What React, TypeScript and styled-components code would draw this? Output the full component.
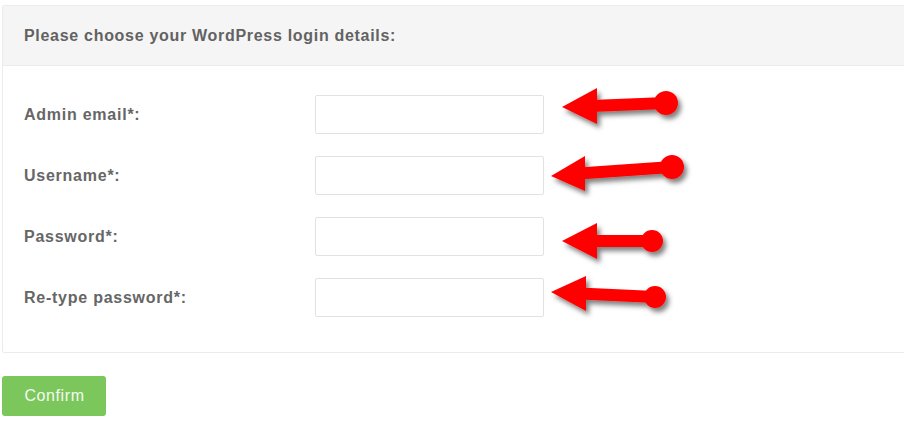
import styled, { createGlobalStyle } from "styled-components";

const GlobalStyle = createGlobalStyle`
  body {
    margin: 0;
    background: #ffffff;
    font-family: "Liberation Sans", Arial, sans-serif;
    overflow: hidden;
  }
`;

const Page = styled.div`
  position: relative;
  width: 904px;
  height: 422px;
  padding: 5px 0 0 2px;
  box-sizing: border-box;
  overflow: hidden;
`;

const Panel = styled.div`
  width: 940px;
  border: 1px solid #ececec;
  border-radius: 2px;
  background: #fff;
`;

const PanelHeader = styled.div`
  height: 59px;
  display: flex;
  align-items: center;
  padding-left: 21px;
  background: #f5f5f5;
  border-bottom: 1px solid #ececec;
  font-size: 16px;
  letter-spacing: 0.7px;
  font-weight: bold;
  color: #626262;
`;

const PanelBody = styled.div`
  display: flex;
  flex-direction: column;
  gap: 22px;
  padding: 29px 0 35px 21px;
`;

const Row = styled.div`
  display: grid;
  grid-template-columns: 291px 229px;
  align-items: center;
`;

const Label = styled.label`
  font-size: 16px;
  letter-spacing: 0.75px;
  font-weight: bold;
  color: #666;
  padding-top: 1px;
`;

const Input = styled.input`
  box-sizing: border-box;
  width: 229px;
  height: 39px;
  border: 1px solid #e2e2e2;
  border-radius: 2px;
  background: #fff;
  outline: none;
`;

const ConfirmButton = styled.button`
  margin-top: 23px;
  width: 104px;
  height: 40px;
  padding: 0 0 0 1px;
  border: none;
  border-radius: 3px;
  background: #7cc75c;
  color: #f4faf0;
  font-family: "Liberation Sans", Arial, sans-serif;
  font-size: 16px;
  letter-spacing: 0.6px;
  cursor: pointer;
`;

const Overlay = styled.svg`
  position: absolute;
  top: 0;
  left: 0;
  pointer-events: none;
`;

type Arrow = {
  tip: [number, number];
  backX: number;
  backTop: number;
  backBottom: number;
  end: [number, number];
  r: number;
};

const arrows: Arrow[] = [
  { tip: [562, 107], backX: 597, backTop: 88, backBottom: 124, end: [666, 103], r: 12 },
  { tip: [551, 176], backX: 585, backTop: 156, backBottom: 191, end: [672, 167], r: 12 },
  { tip: [562, 241], backX: 597, backTop: 223, backBottom: 259, end: [652, 241], r: 11 },
  { tip: [551, 292], backX: 586, backTop: 276, backBottom: 311, end: [655, 297], r: 11 },
];

const fields = ["Admin email*:", "Username*:", "Password*:", "Re-type password*:"];

export default function App() {
  return (
    <>
      <GlobalStyle />
      <Page>
        <Panel>
          <PanelHeader>Please choose your WordPress login details:</PanelHeader>
          <PanelBody>
            {fields.map((f) => (
              <Row key={f}>
                <Label>{f}</Label>
                <Input type={f.includes("assword") ? "password" : "text"} />
              </Row>
            ))}
          </PanelBody>
        </Panel>
        <ConfirmButton>Confirm</ConfirmButton>
        {/* red annotation arrows drawn over the form */}
        <Overlay width="904" height="422">
          <defs>
            <filter id="shadow" x="-20%" y="-40%" width="140%" height="180%">
              <feDropShadow dx="3" dy="4" stdDeviation="2.5" floodColor="#000" floodOpacity="0.5" />
            </filter>
          </defs>
          {arrows.map((a, i) => {
            const midY = (a.backTop + a.backBottom) / 2;
            return (
              <g key={i} fill="#ff0000" stroke="none" filter="url(#shadow)">
                <path
                  d={`M${a.backX - 6} ${midY - 6} L${a.end[0]} ${a.end[1] - 6} L${a.end[0]} ${a.end[1] + 6} L${a.backX - 6} ${midY + 6} Z`}
                />
                <polygon points={`${a.tip[0]},${a.tip[1]} ${a.backX},${a.backTop} ${a.backX},${a.backBottom}`} />
                <circle cx={a.end[0]} cy={a.end[1]} r={a.r} />
              </g>
            );
          })}
        </Overlay>
      </Page>
    </>
  );
}
